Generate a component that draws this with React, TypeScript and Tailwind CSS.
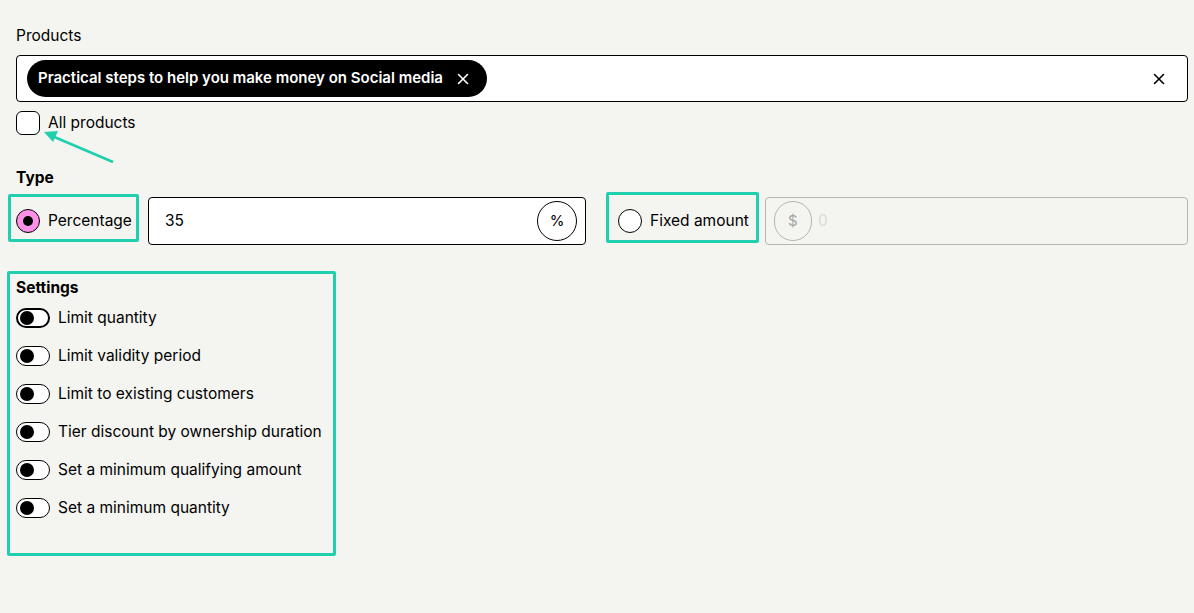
import React from "react";

const font = { fontFamily: "Inter, 'Noto Sans', sans-serif" };

function XIcon({ className }: { className?: string }) {
  return (
    <svg viewBox="0 0 16 16" className={className} fill="none" stroke="currentColor" strokeWidth={1.6} strokeLinecap="round">
      <path d="M3.5 3.5l9 9M12.5 3.5l-9 9" />
    </svg>
  );
}

function Toggle({ focused }: { focused?: boolean }) {
  return (
    <span
      className={
        "relative inline-flex h-[20px] w-[34px] shrink-0 items-center rounded-full bg-white " +
        (focused ? "border-[2.5px] border-black" : "border border-black")
      }
    >
      <span className={"absolute h-[14px] w-[14px] rounded-full bg-black " + (focused ? "left-[2px]" : "left-[3px]")} />
    </span>
  );
}

const settings = [
  "Limit quantity",
  "Limit validity period",
  "Limit to existing customers",
  "Tier discount by ownership duration",
  "Set a minimum qualifying amount",
  "Set a minimum quantity",
];

export default function App() {
  return (
    <div className="relative min-h-[613px] w-full bg-[#f4f4f0] pl-4 pr-[6px] pt-[24px] text-[15.5px] text-black" style={font}>
      {/* Products */}
      <div className="leading-6">Products</div>
      <div className="mt-[7px] flex h-[47px] items-center rounded-[4px] border border-black bg-white pl-[10px] pr-[20px]">
        <span className="inline-flex h-[37px] items-center gap-3 rounded-full bg-black pl-[11px] pr-[16px] text-[15px] font-semibold text-white">
          Practical steps to help you make money on Social media
          <XIcon className="h-[16px] w-[16px]" />
        </span>
        <div className="flex-1" />
        <XIcon className="h-[16px] w-[16px] text-black" />
      </div>
      <label className="relative mt-[9px] flex items-center gap-2 leading-6">
        <span className="h-6 w-6 rounded-[6px] border border-black bg-white" />
        <span>All products</span>
      </label>

      {/* Type */}
      <div className="mt-[31px] font-bold leading-6">Type</div>
      <div className="mt-[7px] grid grid-cols-2 gap-8">
        <div className="flex items-center gap-4">
          <label className="relative flex items-center gap-2 leading-6">
            <span className="flex h-6 w-6 items-center justify-center rounded-full border border-black bg-[#ff90e8]">
              <span className="h-[10px] w-[10px] rounded-full bg-black" />
            </span>
            <span>Percentage</span>
            <span className="pointer-events-none absolute -bottom-[9px] -left-[8px] -right-[7px] -top-[15px] rounded-[2px] border-[3px] border-[#1fcfae]" />
          </label>
          <div className="flex h-12 flex-1 items-center rounded-[4px] border border-black bg-white pl-4 pr-2">
            <span className="flex-1">35</span>
            <span className="flex h-10 w-10 items-center justify-center rounded-full border border-black text-[15px]">%</span>
          </div>
        </div>
        <div className="flex items-center gap-4">
          <label className="relative flex items-center gap-2 leading-6">
            <span className="h-6 w-6 rounded-full border border-black bg-white" />
            <span>Fixed amount</span>
            <span className="pointer-events-none absolute -bottom-[10px] -left-[12px] -right-[10px] -top-[17px] rounded-[2px] border-[3px] border-[#1fcfae]" />
          </label>
          <div className="flex h-12 flex-1 items-center gap-[6px] rounded-[4px] border border-[#b5b5b3] bg-[#f4f4f0] pl-2 pr-2">
            <span className="flex h-10 w-[38px] items-center justify-center rounded-full border border-[#b5b5b3] text-[15px] text-[#a3a3a3]">$</span>
            <span className="text-[#dcdcd8]">0</span>
          </div>
        </div>
      </div>

      {/* Settings */}
      <div className="relative mt-[31px]">
        <div className="font-bold leading-6">Settings</div>
        <div className="mt-[6px] flex flex-col gap-[14px]">
          {settings.map((s, i) => (
            <div key={s} className="flex items-center gap-2 leading-6">
              <Toggle focused={i === 0} />
              <span>{s}</span>
            </div>
          ))}
        </div>
        <span className="pointer-events-none absolute -left-[9px] -top-[5px] h-[285px] w-[329px] rounded-[2px] border-[3px] border-[#1fcfae]" />
      </div>

      {/* annotation arrow */}
      <svg className="pointer-events-none absolute left-0 top-0" width="140" height="180" viewBox="0 0 140 180">
        <line x1="113" y1="162" x2="52" y2="136" stroke="#1fcfae" strokeWidth="2.5" />
        <polygon points="44,132 58,131 53,142" fill="#1fcfae" />
      </svg>
    </div>
  );
}
